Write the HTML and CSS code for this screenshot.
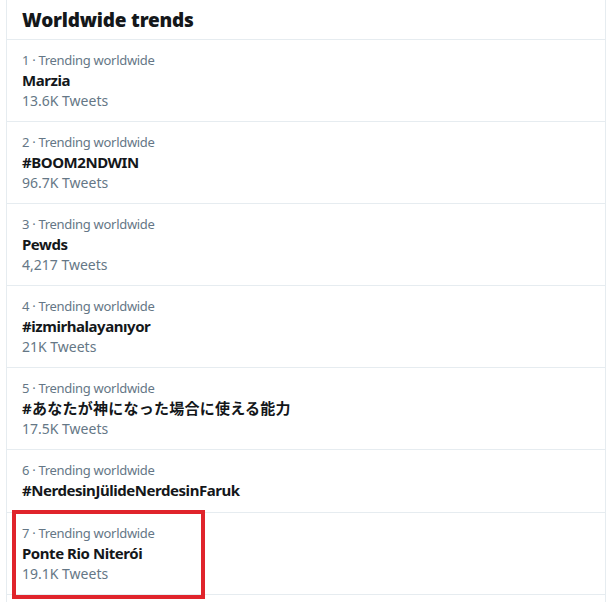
FILE: index.html
```html
<!DOCTYPE html>
<html lang="en">
<head>
<meta charset="utf-8">
<title>Worldwide trends</title>
<link rel="stylesheet" href="styles.css">
</head>
<body>
<div class="panel">
  <div class="header"><h2 class="title">Worldwide trends</h2></div>
  <ul class="trends">
    <li class="trend">
      <div class="meta">1 · Trending worldwide</div>
      <div class="name">Marzia</div>
      <div class="count">13.6K Tweets</div>
    </li>
    <li class="trend">
      <div class="meta">2 · Trending worldwide</div>
      <div class="name">#BOOM2NDWIN</div>
      <div class="count">96.7K Tweets</div>
    </li>
    <li class="trend">
      <div class="meta">3 · Trending worldwide</div>
      <div class="name">Pewds</div>
      <div class="count">4,217 Tweets</div>
    </li>
    <li class="trend">
      <div class="meta">4 · Trending worldwide</div>
      <div class="name">#izmirhalayanıyor</div>
      <div class="count">21K Tweets</div>
    </li>
    <li class="trend">
      <div class="meta">5 · Trending worldwide</div>
      <div class="name name-cjk">#あなたが神になった場合に使える能力</div>
      <div class="count">17.5K Tweets</div>
    </li>
    <li class="trend">
      <div class="meta">6 · Trending worldwide</div>
      <div class="name">#NerdesinJülideNerdesinFaruk</div>
    </li>
    <li class="trend highlighted">
      <div class="meta">7 · Trending worldwide</div>
      <div class="name">Ponte Rio Niterói</div>
      <div class="count">19.1K Tweets</div>
      <span class="mark"></span>
    </li>
  </ul>
</div>
</body>
</html>
```

FILE: styles.css
```css
html, body {
  margin: 0;
  padding: 0;
  background: #ffffff;
}
body {
  font-family: "Noto Sans", "Noto Sans CJK JP", sans-serif;
  color: #14171a;
}
.panel {
  margin-left: 6px;
  width: 598px;
  min-height: 602px;
  border-left: 1px solid #e6ecf0;
  border-right: 1px solid #e6ecf0;
}
.header {
  height: 39px;
  border-bottom: 1px solid #e6ecf0;
  padding: 0 15px;
  display: flex;
  align-items: center;
}
.title {
  margin: 0;
  font-size: 19px;
  font-weight: 900;
  line-height: 24px;
  letter-spacing: -0.2px;
  color: #14171a;
}
.trends {
  list-style: none;
  margin: 0;
  padding: 0;
}
.trend {
  position: relative;
  padding: 10px 15px 11px;
  border-bottom: 1px solid #e6ecf0;
}
.meta {
  font-size: 13px;
  line-height: 20px;
  letter-spacing: -0.3px;
  color: #657786;
}
.name {
  font-size: 15px;
  font-weight: 700;
  line-height: 21px;
  letter-spacing: -0.45px;
  color: #14171a;
}
.name-cjk {
  letter-spacing: 0.25px;
}
.count {
  font-size: 14px;
  line-height: 19px;
  color: #657786;
}
.mark {
  position: absolute;
  left: 5px;
  top: -3px;
  width: 185px;
  height: 81px;
  border: 4px solid #e0242b;
  pointer-events: none;
}
```
